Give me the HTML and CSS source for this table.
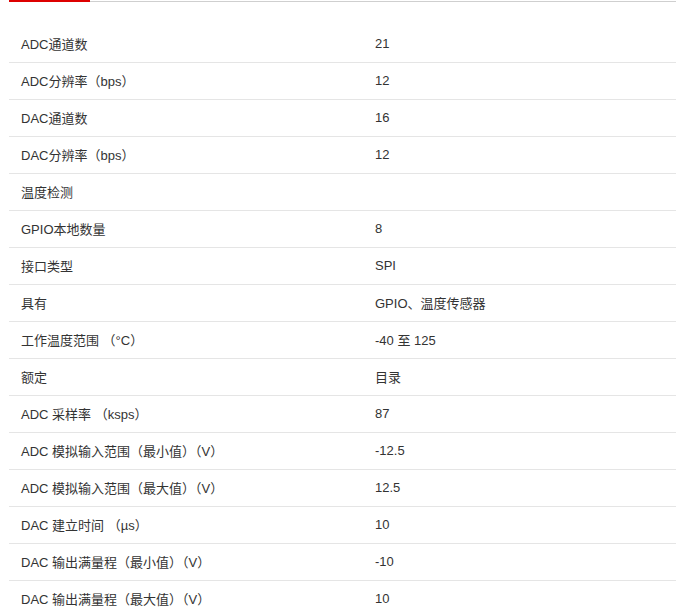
FILE: index.html
```html
<!DOCTYPE html>
<html lang="zh-CN">
<head>
<meta charset="utf-8">
<title>参数</title>
<link rel="stylesheet" href="styles.css">
</head>
<body>
<div class="page">
  <div class="tabs"><div class="tab-active"></div><div class="tab-rest"></div></div>
  <div class="specs">
    <div class="row"><div class="label">ADC通道数</div><div class="value">21</div></div>
    <div class="row"><div class="label">ADC分辨率（bps）</div><div class="value">12</div></div>
    <div class="row"><div class="label">DAC通道数</div><div class="value">16</div></div>
    <div class="row"><div class="label">DAC分辨率（bps）</div><div class="value">12</div></div>
    <div class="row"><div class="label">温度检测</div><div class="value"></div></div>
    <div class="row"><div class="label">GPIO本地数量</div><div class="value">8</div></div>
    <div class="row"><div class="label">接口类型</div><div class="value">SPI</div></div>
    <div class="row"><div class="label">具有</div><div class="value">GPIO、温度传感器</div></div>
    <div class="row"><div class="label">工作温度范围 （°C）</div><div class="value">-40 至 125</div></div>
    <div class="row"><div class="label">额定</div><div class="value">目录</div></div>
    <div class="row"><div class="label">ADC 采样率 （ksps）</div><div class="value">87</div></div>
    <div class="row"><div class="label">ADC 模拟输入范围（最小值）（V）</div><div class="value">-12.5</div></div>
    <div class="row"><div class="label">ADC 模拟输入范围（最大值）（V）</div><div class="value">12.5</div></div>
    <div class="row"><div class="label">DAC 建立时间 （µs）</div><div class="value">10</div></div>
    <div class="row"><div class="label">DAC 输出满量程（最小值）（V）</div><div class="value">-10</div></div>
    <div class="row"><div class="label">DAC 输出满量程（最大值）（V）</div><div class="value">10</div></div>
  </div>
</div>
</body>
</html>
```
FILE: styles.css
```css
html, body {
  margin: 0;
  padding: 0;
  background: #fff;
}
body {
  font-family: "Liberation Sans", Arial, "Noto Sans CJK SC", sans-serif;
  font-size: 13px;
  color: #333;
}
.page {
  padding: 0 1px 0 9px;
}
.tabs {
  display: flex;
  height: 2px;
}
.tab-active {
  width: 81px;
  background: #dd0000;
}
.tab-rest {
  flex: 1;
  height: 1px;
  margin-top: 1px;
  background: #cfcfcf;
}
.specs {
  margin-top: 24px;
}
.row {
  display: grid;
  grid-template-columns: 354px 1fr;
  height: 36px;
  box-sizing: content-box;
  padding-bottom: 0;
  align-items: center;
  border-bottom: 1px solid #e5e5e5;
}
.label, .value {
  padding-left: 12px;
  padding-bottom: 2px;
  white-space: nowrap;
}
```
